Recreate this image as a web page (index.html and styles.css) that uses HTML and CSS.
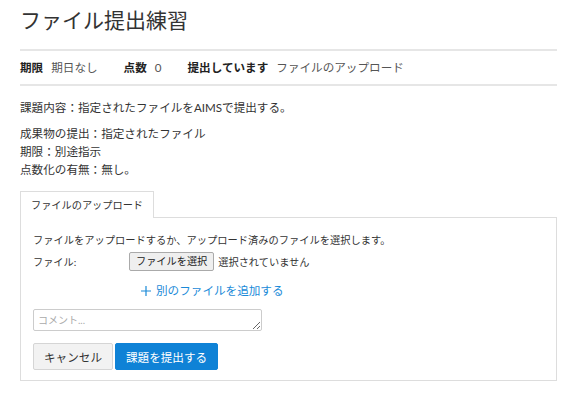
FILE: index.html
```html
<!DOCTYPE html>
<html lang="ja">
<head>
  <meta charset="UTF-8" />
  <title>ファイル提出練習</title>
  <link rel="stylesheet" href="styles.css">
</head>
<body>

  <h1 class="title">ファイル提出練習</h1>

  <div class="meta">
    <span class="meta-label">期限</span><span class="meta-value">期日なし</span>
    <span class="meta-label">点数</span><span class="meta-value">0</span>
    <span class="meta-label">提出しています</span><span class="meta-value">ファイルのアップロード</span>
  </div>

  <p class="desc">課題内容：指定されたファイルをAIMSで提出する。</p>
  <p class="desc-list">
    成果物の提出：指定されたファイル<br>
    期限：別途指示<br>
    点数化の有無：無し。
  </p>

  <div class="tabs">
    <div class="tab">ファイルのアップロード</div>
  </div>

  <div class="panel">
    <p class="hint">ファイルをアップロードするか、アップロード済みのファイルを選択します。</p>
    <div class="file-row">
      <label class="file-label">ファイル:</label>
      <span class="file-btn">ファイルを選択</span>
      <span class="file-status">選択されていません</span>
    </div>
    <a class="add-file" href="#">
      <svg class="plus" width="10" height="10" viewBox="0 0 10 10">
        <path d="M5 0V10M0 5H10" stroke="#1a8ad8" stroke-width="1.2" fill="none" />
      </svg>
      別のファイルを追加する
    </a>
    <textarea class="comment" placeholder="コメント..."></textarea>
    <div class="actions">
      <button class="btn">キャンセル</button>
      <button class="btn btn-primary">課題を提出する</button>
    </div>
  </div>

</body>
</html>
```

FILE: styles.css
```css
body {
  margin: 0;
  padding: 0 10px 0 20px;
  background-color: #fff;
  color: #333;
  font-family: 'Lato', 'Noto Sans CJK JP', sans-serif;
  font-size: 11.6px;
}
.title {
  margin: 0;
  padding-top: 5px;
  font-size: 21px;
  font-weight: normal;
  line-height: 30px;
  color: #333;
}
.meta {
  margin-top: 14px;
  height: 33px;
  line-height: 33px;
  border-top: 2px solid #e6e6e6;
  border-bottom: 2px solid #e6e6e6;
  white-space: nowrap;
}
.meta-label {
  font-weight: bold;
  color: #222;
  margin-right: 8px;
}
.meta-value {
  color: #555;
  margin-right: 23px;
}
.desc {
  margin: 13px 0 0;
  line-height: 18px;
}
.desc-list {
  margin: 8px 0 0;
  line-height: 18px;
}
.tabs {
  margin-top: 12px;
  display: flex;
}
.tab {
  width: 122px;
  height: 26px;
  line-height: 26px;
  padding-left: 10px;
  border: 1px solid #ddd;
  border-bottom: none;
  background-color: #fff;
  color: #333;
  font-size: 10.2px;
  white-space: nowrap;
  margin-bottom: -1px;
  position: relative;
}
.panel {
  border: 1px solid #ddd;
  padding: 13px 12px 10px;
}
.hint {
  margin: 0;
  line-height: 18px;
  font-size: 10.25px;
}
.file-row {
  display: flex;
  align-items: center;
  height: 20px;
  margin-top: 2px;
  font-size: 10.2px;
}
.file-label {
  width: 96px;
}
.file-btn {
  height: 17px;
  line-height: 17px;
  padding: 0 6px;
  border: 1px solid #aaa;
  border-radius: 2px;
  background-color: #efefef;
  color: #222;
  margin-right: 4px;
}
.add-file {
  display: flex;
  align-items: center;
  gap: 5px;
  margin: 11px 0 0 108px;
  line-height: 18px;
  color: #1a8ad8;
  text-decoration: none;
}
.comment {
  display: block;
  margin-top: 9px;
  width: 229px;
  height: 22px;
  box-sizing: border-box;
  padding: 2px 4px;
  border: 1px solid #ccc;
  border-radius: 2px;
  font-family: 'Lato', 'Noto Sans CJK JP', sans-serif;
  font-size: 10px;
  resize: vertical;
}
.comment::placeholder {
  color: #aaa;
}
.actions {
  display: flex;
  gap: 2px;
  margin-top: 12px;
}
.btn {
  height: 27px;
  padding: 0 10px;
  border: 1px solid #d5d5d5;
  border-radius: 2px;
  background-color: #f2f2f2;
  color: #333;
  font-family: 'Lato', 'Noto Sans CJK JP', sans-serif;
  font-size: 11.6px;
}
.btn-primary {
  background-color: #0f82d6;
  border-color: #0f82d6;
  color: #fff;
}
```
